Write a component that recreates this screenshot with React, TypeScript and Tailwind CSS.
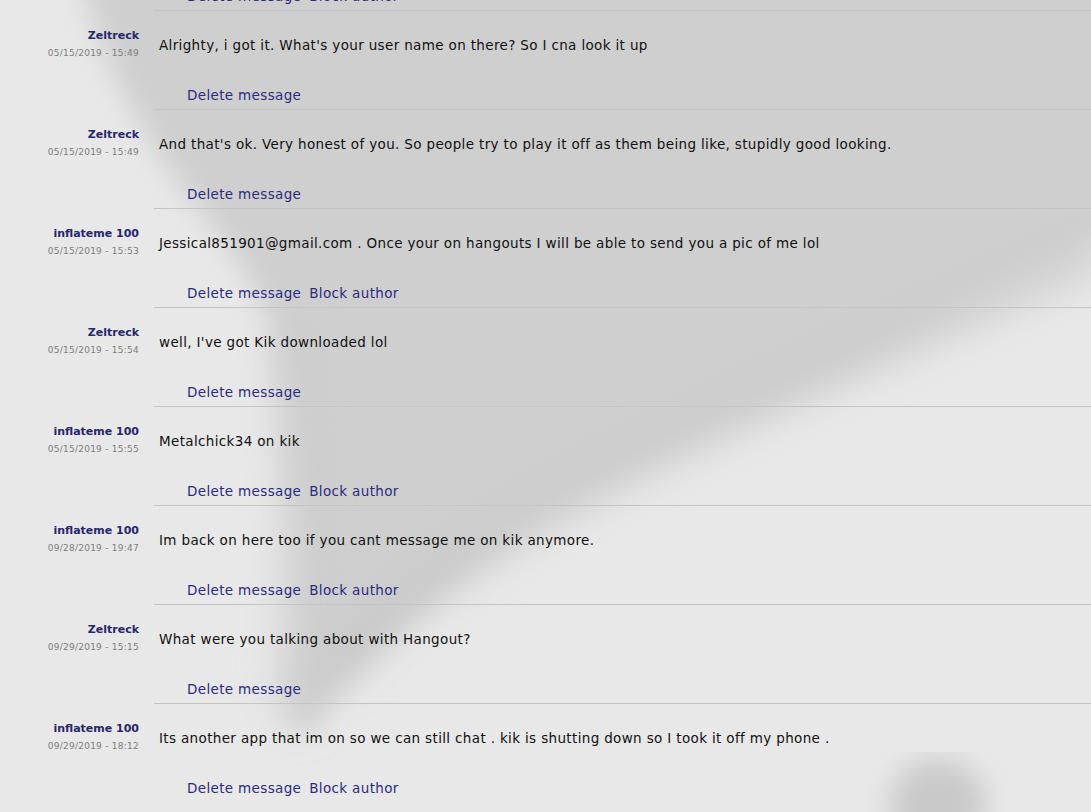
import React from 'react';

interface Message {
  author: string;
  date: string;
  text: string;
  canBlock: boolean;
}

const messages: Message[] = [
  { author: 'inflateme 100', date: '05/15/2019 - 15:48', text: '', canBlock: true },
  { author: 'Zeltreck', date: '05/15/2019 - 15:49', text: "Alrighty, i got it. What's your user name on there? So I cna look it up", canBlock: false },
  { author: 'Zeltreck', date: '05/15/2019 - 15:49', text: "And that's ok. Very honest of you. So people try to play it off as them being like, stupidly good looking.", canBlock: false },
  { author: 'inflateme 100', date: '05/15/2019 - 15:53', text: 'Jessical851901@gmail.com . Once your on hangouts I will be able to send you a pic of me lol', canBlock: true },
  { author: 'Zeltreck', date: '05/15/2019 - 15:54', text: "well, I've got Kik downloaded lol", canBlock: false },
  { author: 'inflateme 100', date: '05/15/2019 - 15:55', text: 'Metalchick34 on kik', canBlock: true },
  { author: 'inflateme 100', date: '09/28/2019 - 19:47', text: 'Im back on here too if you cant message me on kik anymore.', canBlock: true },
  { author: 'Zeltreck', date: '09/29/2019 - 15:15', text: 'What were you talking about with Hangout?', canBlock: false },
  { author: 'inflateme 100', date: '09/29/2019 - 18:12', text: 'Its another app that im on so we can still chat . kik is shutting down so I took it off my phone .', canBlock: true },
];

// blurred grey swoosh behind the list
const Backdrop = () => (
  <svg
    className="absolute inset-0 w-full h-full pointer-events-none"
    viewBox="0 0 1091 812"
    preserveAspectRatio="none"
  >
    <defs>
      <filter id="soft" filterUnits="userSpaceOnUse" x="-200" y="-200" width="1500" height="1200">
        <feGaussianBlur stdDeviation="14" />
      </filter>
      <filter id="softer" filterUnits="userSpaceOnUse" x="-200" y="-200" width="1500" height="1200">
        <feGaussianBlur stdDeviation="20" />
      </filter>
      <clipPath id="blobClip">
        <rect x="868" y="752" width="240" height="80" />
      </clipPath>
    </defs>
    <rect width="1091" height="812" fill="#e8e8e8" />
    <path
      d="M75 -40 L88 0 C100 60 150 150 200 210 C250 270 285 330 290 420 C298 520 305 620 292 700 C290 730 300 745 320 720 C360 660 430 590 520 528 C610 470 700 430 800 385 C900 340 1000 280 1130 230 L1130 -40 Z"
      fill="#cfcfcf"
      filter="url(#soft)"
    />
    <path
      d="M330 670 C420 580 520 520 640 460 C760 400 900 340 1100 250"
      stroke="#c6c6c6"
      strokeWidth="26"
      fill="none"
      filter="url(#softer)"
    />
    <path
      d="M285 330 C298 430 302 560 292 720"
      stroke="#c9c9c9"
      strokeWidth="22"
      fill="none"
      filter="url(#softer)"
    />
    <g clipPath="url(#blobClip)">
      <ellipse cx="938" cy="805" rx="48" ry="46" fill="#c9c9c9" filter="url(#soft)" />
    </g>
  </svg>
);

const Row = ({ msg }: { msg: Message }) => (
  <div className="flex">
    <div className="w-[154px] shrink-0 pr-[15px] pt-[19px] text-right">
      <div className="text-[11px] leading-[13px] font-bold text-[#27276b]">{msg.author}</div>
      <div className="mt-[6px] text-[9px] leading-[11px] text-[#7d7d7d] tracking-[0.25px]">{msg.date}</div>
    </div>
    <div className="flex-1 border-t border-[#c4c4c4] text-[13.5px] leading-[16px] tracking-[0.35px]">
      <div className="pl-[5px] pt-[26px] h-[42px] text-[#111111]">{msg.text}</div>
      <div className="flex gap-[8px] pl-[33px] pt-[34px] pb-[6px] text-[#2b2b7e]">
        <a className="cursor-pointer">Delete message</a>
        {msg.canBlock && <a className="cursor-pointer">Block author</a>}
      </div>
    </div>
  </div>
);

export default function App() {
  return (
    <div className="relative w-[1091px] h-[812px] overflow-hidden font-['DejaVu_Sans',Verdana,sans-serif]">
      <Backdrop />
      <div className="relative -mt-[89px]">
        {messages.map((m, i) => (
          <Row key={i} msg={m} />
        ))}
      </div>
    </div>
  );
}
